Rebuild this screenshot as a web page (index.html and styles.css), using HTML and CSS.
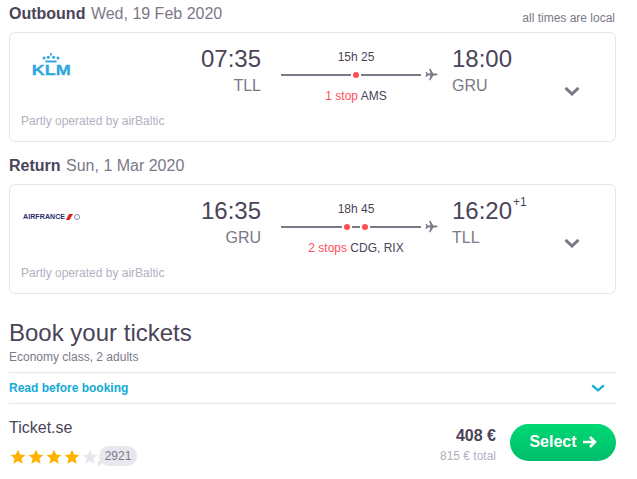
FILE: index.html
```html
<!DOCTYPE html>
<html lang="en">
<head>
<meta charset="utf-8">
<title>Book your tickets</title>
<link rel="stylesheet" href="styles.css">
</head>
<body>
<main class="page">
  <div class="leg-head first">
    <div><strong>Outbound</strong> <span class="date">Wed, 19 Feb 2020</span></div>
    <div class="local">all times are local</div>
  </div>
  <section class="card">
    <div class="row">
      <div class="logo-col">
        <div class="klm">
          <svg class="crown" viewBox="0 0 18 10" width="18" height="10"><g fill="#2fa8e0"><circle cx="9" cy="1" r="1"/><rect x="8.5" y="0" width="1" height="3"/><circle cx="2" cy="5" r="1.5"/><circle cx="6.3" cy="4.3" r="1.5"/><circle cx="11.7" cy="4.3" r="1.5"/><circle cx="16" cy="5" r="1.5"/><path d="M3 7.5h12l-.8 2H3.8z"/></g></svg>
          <span class="klm-text">KLM</span>
        </div>
      </div>
      <div class="time-col"><div class="time">07:35</div><div class="code">TLL</div></div>
      <div class="route">
        <div class="dur">15h 25</div>
        <div class="track">
          <i class="seg w70"></i><b class="dot"></b><i class="seg w60"></i>
          <svg class="plane" viewBox="0 0 14 14" width="13" height="13"><path fill="#7c7888" d="M13.6 7c0-.6-.9-1-2-1H9L5.8.8H4.4L6 6H3L1.6 4.2H.5L1.3 7 .5 9.800h1.100L3 8h3L4.400 13.200h1.400L9 8h2.600c1.100 0 2-.4 2-1z"/></svg>
        </div>
        <div class="stops"><span class="red">1 stop</span> AMS</div>
      </div>
      <div class="arr-col"><div class="time">18:00</div><div class="code">GRU</div></div>
      <svg class="chev" viewBox="0 0 16 10" width="16" height="10"><path d="M1.500 1.800 8 8l6.500-6.200" fill="none" stroke="#7c7888" stroke-width="3"/></svg>
    </div>
    <div class="operated">Partly operated by airBaltic</div>
  </section>

  <div class="leg-head">
    <div><strong>Return</strong> <span class="date">Sun, 1 Mar 2020</span></div>
  </div>
  <section class="card">
    <div class="row">
      <div class="logo-col">
        <div class="af">
          <span class="af-text">AIRFRANCE</span>
          <svg viewBox="0 0 14 6" width="14" height="6"><path fill="#e2231a" d="M3 0h4L3.500 6H0z"/><circle cx="11" cy="3" r="2.500" fill="none" stroke="#7f8fb0" stroke-width="1"/></svg>
        </div>
      </div>
      <div class="time-col"><div class="time">16:35</div><div class="code">GRU</div></div>
      <div class="route">
        <div class="dur">18h 45</div>
        <div class="track">
          <i class="seg w61"></i><b class="dot"></b><i class="seg w8"></i><b class="dot"></b><i class="seg w51"></i>
          <svg class="plane" viewBox="0 0 14 14" width="13" height="13"><path fill="#7c7888" d="M13.6 7c0-.6-.9-1-2-1H9L5.8.8H4.400L6 6H3L1.600 4.200H.5L1.300 7 .5 9.800h1.100L3 8h3L4.400 13.200h1.400L9 8h2.600c1.100 0 2-.4 2-1z"/></svg>
        </div>
        <div class="stops"><span class="red">2 stops</span> CDG, RIX</div>
      </div>
      <div class="arr-col"><div class="time">16:20<sup class="plus">+1</sup></div><div class="code">TLL</div></div>
      <svg class="chev" viewBox="0 0 16 10" width="16" height="10"><path d="M1.500 1.800 8 8l6.500-6.200" fill="none" stroke="#7c7888" stroke-width="3"/></svg>
    </div>
    <div class="operated">Partly operated by airBaltic</div>
  </section>

  <h2 class="book">Book your tickets</h2>
  <div class="sub">Economy class, 2 adults</div>
  <div class="read">
    <span>Read before booking</span>
    <svg viewBox="0 0 14 8" width="14" height="8"><path d="M1.200 1.300 7 6.300l5.800-5" fill="none" stroke="#11acd6" stroke-width="2.200"/></svg>
  </div>
  <div class="offer">
    <div class="seller">
      <div class="name">Ticket.se</div>
      <div class="rating">
        <div class="stars">
          <svg viewBox="0 0 24 24" width="16" height="16"><path fill="#ffb300" d="M12 1l3.300 7.300 7.700.8-5.800 5.200 1.700 7.700L12 18.100 5.100 22l1.700-7.700L1 9.100l7.700-.8z"/></svg>
          <svg viewBox="0 0 24 24" width="16" height="16"><path fill="#ffb300" d="M12 1l3.300 7.300 7.700.8-5.800 5.200 1.700 7.700L12 18.100 5.100 22l1.700-7.700L1 9.100l7.700-.8z"/></svg>
          <svg viewBox="0 0 24 24" width="16" height="16"><path fill="#ffb300" d="M12 1l3.300 7.300 7.700.8-5.800 5.200 1.700 7.700L12 18.100 5.100 22l1.700-7.700L1 9.100l7.700-.8z"/></svg>
          <svg viewBox="0 0 24 24" width="16" height="16"><path fill="#ffb300" d="M12 1l3.300 7.300 7.700.8-5.800 5.200 1.700 7.700L12 18.100 5.100 22l1.700-7.700L1 9.100l7.700-.8z"/></svg>
          <svg viewBox="0 0 24 24" width="16" height="16"><path fill="#e9e7ee" d="M12 1l3.300 7.300 7.700.8-5.800 5.200 1.700 7.700L12 18.100 5.100 22l1.700-7.700L1 9.100l7.700-.8z"/></svg>
        </div>
        <div class="bubble">2921</div>
      </div>
    </div>
    <div class="price">
      <div class="per">408 €</div>
      <div class="total">815 € total</div>
    </div>
    <button class="select">Select
      <svg viewBox="0 0 14 12" width="14" height="12"><path d="M0 6h11.500M7 1l5 5-5 5" fill="none" stroke="#fff" stroke-width="2.600"/></svg>
    </button>
  </div>
</main>
</body>
</html>
```

FILE: styles.css
```css
* { box-sizing: border-box; }
html, body { margin: 0; padding: 0; background: #fff; overflow: hidden; }
body { font-family: "Liberation Sans", Arial, sans-serif; color: #4a4458; }
.page { width: 607px; margin-left: 9px; }

.leg-head { display: flex; justify-content: space-between; align-items: flex-end; height: 20px; margin-top: 14px; margin-bottom: 8px; font-size: 16px; line-height: 20px; }
.leg-head.first { margin-top: 4px; }
.date { color: #7c7888; margin-left: 1px; }
.local { font-size: 12px; color: #7c7888; line-height: 14px; margin-right: 1px; margin-bottom: -1px; }

.card { height: 110px; border: 1px solid #e6e5ec; border-radius: 6px; }
.row { display: flex; height: 81px; }
.logo-col { width: 80px; padding-top: 20px; }
.time-col { width: 171px; text-align: right; padding-top: 10px; }
.arr-col { width: 113px; margin-left: 21px; padding-top: 10px; }
.time { font-size: 24px; line-height: 32px; color: #4a4458; position: relative; }
.code { font-size: 16px; line-height: 20px; margin-top: 1px; color: #7c7888; }
.plus { position: absolute; font-size: 12px; line-height: 14px; top: 0; margin-left: 1px; color: #4a4458; vertical-align: baseline; }

.route { width: 150px; margin-left: 20px; text-align: center; padding-top: 17px; }
.dur { font-size: 12px; line-height: 15px; }
.track { display: flex; align-items: center; height: 13px; margin-top: 3px; width: 157px; }
.seg { display: block; flex: none; height: 2px; background: #7c7888; }
.w70 { width: 70px; } .w60 { width: 60px; } .w61 { width: 61px; } .w8 { width: 8px; } .w51 { width: 51px; }
.dot { display: block; flex: none; width: 6px; height: 6px; margin: 0 2px; border-radius: 50%; background: #ff4f55; }
.plane { margin-left: 4px; flex: none; }
.stops { font-size: 12px; line-height: 15px; margin-top: 8px; }
.red { color: #ff4f55; }

.chev { flex: none; margin-left: -1px; margin-top: 53px; }
.operated { font-size: 12px; line-height: 14px; color: #b4b0c0; margin-left: 11px; }

.klm { display: flex; flex-direction: column; align-items: center; width: 82px; }
.crown { display: block; }
.klm-text { font-size: 15px; line-height: 12px; font-weight: 700; color: #2fa8e0; transform: scaleX(1.2); margin-top: 1px; -webkit-text-stroke: .3px #2fa8e0; }
.af { display: flex; align-items: center; gap: 1px; margin-left: 13px; margin-top: 8px; }
.af-text { font-size: 7px; line-height: 8px; font-weight: 700; color: #2a2a6e; letter-spacing: .1px; }

.book { margin: 25px 0 0; font-size: 24px; font-weight: 400; line-height: 28px; color: #4a4458; }
.sub { font-size: 12px; line-height: 14px; margin-top: 3px; color: #7c7888; }
.read { display: flex; justify-content: space-between; align-items: center; height: 32px; margin-top: 8px; padding-right: 11px; border-top: 1px solid #e6e5ec; border-bottom: 1px solid #e6e5ec; font-size: 12px; font-weight: 700; color: #11acd6; }

.offer { display: flex; align-items: flex-start; }
.seller { flex: 1; padding-top: 14px; }
.name { font-size: 16px; line-height: 20px; }
.rating { display: flex; align-items: flex-start; margin-top: 8px; margin-left: 1px; }
.stars { display: flex; gap: 2px; margin-top: 3px; }
.bubble { position: relative; margin-left: 1px; width: 38px; height: 20px; border-radius: 10px; background: #e9e7ee; font-size: 12px; line-height: 20px; text-align: center; color: #7c7888; }
.bubble::after { content: ""; position: absolute; left: -1px; bottom: -3px; width: 0; height: 0; border-top: 8px solid #e9e7ee; border-right: 5px solid transparent; }
.price { text-align: right; padding-top: 22px; margin-right: 14px; }
.per { font-size: 16px; line-height: 20px; font-weight: 700; }
.total { font-size: 12px; line-height: 14px; margin-top: 3px; color: #b4b0c0; }
.select { display: flex; align-items: center; justify-content: center; gap: 6px; width: 106px; height: 37px; margin-top: 20px; border: 0; border-radius: 19px; background: linear-gradient(#00d873, #00bd6b); color: #fff; font: 700 16px "Liberation Sans", Arial, sans-serif; padding: 0 0 1px; }
```
